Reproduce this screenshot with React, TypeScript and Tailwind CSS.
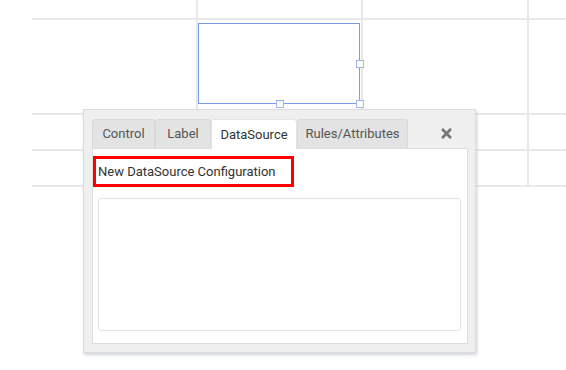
import { FaTimes } from "react-icons/fa";

const tabs = ["Control", "Label", "DataSource", "Rules/Attributes"];
const tabWidths = ["w-[63px]", "w-[56px]", "w-[86px]", "w-[111px]"];

function GridRow({ height }: { height: string }) {
  return (
    <div className={`grid grid-cols-[166px_165px_166px_1fr] ${height}`}>
      <div className="border-b-2 border-r-2 border-[#e8e8e8]" />
      <div className="border-b-2 border-r-2 border-[#e8e8e8]" />
      <div className="border-b-2 border-r-2 border-[#e8e8e8]" />
      <div className="border-b-2 border-[#e8e8e8]" />
    </div>
  );
}

export default function App() {
  return (
    <main className="relative h-[370px] w-[566px] overflow-hidden bg-white font-['Roboto',_'Liberation_Sans',_sans-serif]">
      <div className="ml-[32px] flex flex-col">
        <GridRow height="h-[20px]" />
        <GridRow height="h-[95px]" />
        <GridRow height="h-[36px]" />
        <GridRow height="h-[36px]" />
      </div>

      {/* selected control on the canvas */}
      <div className="absolute left-[198px] top-[23px] h-[81px] w-[162px] border border-[#7b9ce8]">
        <span className="absolute right-[-5px] top-[36px] h-[8px] w-[8px] border border-[#9db5ef] bg-white" />
        <span className="absolute bottom-[-5px] left-[77px] h-[8px] w-[8px] border border-[#9db5ef] bg-white" />
        <span className="absolute bottom-[-5px] right-[-5px] h-[8px] w-[8px] border border-[#9db5ef] bg-white" />
      </div>

      {/* properties popup */}
      <section className="absolute left-[83px] top-[109px] flex h-[244px] w-[393px] flex-col border border-[#dcdcdc] bg-[#efefef] pb-[8px] pl-[8px] pr-[7px] pt-[9px] shadow-[1px_2px_3px_rgba(150,160,180,0.45)]">
        <div className="flex h-[29px] items-stretch">
          {tabs.map((tab, i) => (
            <div
              key={tab}
              className={`flex ${tabWidths[i]} items-center justify-center rounded-t-[3px] border border-b-0 text-[13px] ${
                tab === "DataSource"
                  ? "z-10 mb-[-1px] border-[#e4e4e4] bg-white text-[#333]"
                  : "border-[#d9d9d9] bg-[#e3e3e3] text-[#555]"
              }`}
            >
              {tab}
            </div>
          ))}
          <div className="flex flex-1 items-center justify-center pl-[16px] text-[#777]">
            <FaTimes className="h-[15px] w-[13px]" />
          </div>
        </div>

        <div className="flex flex-1 flex-col border border-[#dedede] bg-white pb-[12px] pl-0 pr-[6px] pt-[7px]">
          <div className="flex h-[31px] w-[201px] items-center border-[3px] border-[#ff0000] pl-[2px] text-[13px] text-[#333]">
            New DataSource Configuration
          </div>
          <div className="ml-[5px] mt-[11px] flex-1 rounded-[3px] border border-[#e2e2e8]" />
        </div>
      </section>
    </main>
  );
}
